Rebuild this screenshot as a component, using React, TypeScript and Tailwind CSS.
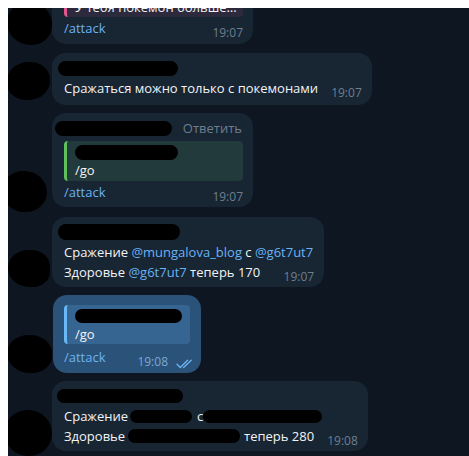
import React from 'react';

const Time = ({ children, out }: { children: React.ReactNode; out?: boolean }) => (
  <span
    className={`ml-auto shrink-0 pl-[13px] text-[12px] leading-4 translate-y-[3px] ${
      out ? 'text-[#7da8d3]' : 'text-[#6d7f8f]'
    }`}
  >
    {children}
  </span>
);

// redacted name, scribbled over with a marker
const Blot = ({ className }: { className: string }) => (
  <span className={`inline-block rounded-full bg-black ${className}`} />
);

const DoubleCheck = () => (
  <svg width="18" height="10" viewBox="0 0 18 10" fill="none" className="ml-[8px] mb-[1px] translate-y-[3px] shrink-0">
    <path d="M1 5.2l3.3 3.3L11.6 1.2" stroke="#6ab3f3" strokeWidth="1.4" strokeLinecap="round" strokeLinejoin="round" />
    <path d="M7.6 8.5L15.2 1.2" stroke="#6ab3f3" strokeWidth="1.4" strokeLinecap="round" />
  </svg>
);

const Link = ({ children }: { children: React.ReactNode }) => (
  <span className="text-[#6ab3f3]">{children}</span>
);

export default function App() {
  return (
    <div className="h-[456px] w-[469px] overflow-hidden bg-white pl-2 pt-2">
      <div className="flex h-[448px] flex-col justify-end overflow-hidden bg-[#0e1621] pb-[5px] font-['Open_Sans',sans-serif] text-[13px] leading-5 text-[#f2f4f6]">
        {/* 1 */}
        <div className="mb-[9px] flex items-end">
          <div className="flex w-11 shrink-0 items-end">
            <div className="relative z-10 -ml-px h-[43px] w-[46px] translate-y-px rounded-[48%_52%_46%_54%] bg-black" />
          </div>
          <div className="w-[201px] rounded-[14px] bg-[#182533] pl-3 pr-[10px] pt-[5px] pb-[6px]">
            <div className="mb-px rounded-[4px] border-l-[3px] border-[#e4568f] bg-[#2d2a3d] pl-[8px] pr-1 pt-[2px] pb-px leading-[18px]">
              <div className="flex h-[18px] items-center">
                <Blot className="-ml-[8px] h-[15px] w-[110px]" />
              </div>
              <div className="overflow-hidden whitespace-nowrap">У тебя покемон больше…</div>
            </div>
            <div className="flex items-end">
              <Link>/attack</Link>
              <Time>19:07</Time>
            </div>
          </div>
        </div>

        {/* 2 */}
        <div className="mb-2 flex items-end">
          <div className="flex w-11 shrink-0 items-end">
            <div className="relative z-10 -ml-px h-[38px] w-[43px] -translate-y-[5px] rounded-[50%_46%_50%_44%] bg-black" />
          </div>
          <div className="rounded-[14px] bg-[#182533] pl-3 pr-[10px] pt-[5px] pb-[7px]">
            <div className="flex h-5 items-center">
              <Blot className="-ml-[6px] h-[15px] w-[120px]" />
            </div>
            <div className="flex items-end">
              <span>Сражаться можно только с покемонами</span>
              <Time>19:07</Time>
            </div>
          </div>
        </div>

        {/* 3 */}
        <div className="mb-[10px] flex items-end">
          <div className="flex w-11 shrink-0 items-end">
            <div className="relative z-10 -ml-[5px] h-[41px] w-[44px] translate-y-[5px] rounded-[46%_54%_50%_50%] bg-black" />
          </div>
          <div className="w-[201px] rounded-[14px] bg-[#182533] pl-3 pr-[10px] pt-[5px] pb-[5px]">
            <div className="flex h-5 items-center">
              <Blot className="-ml-[9px] h-[15px] w-[117px]" />
              <span className="ml-auto pr-px text-[#6d7f8f]">Ответить</span>
            </div>
            <div className="mt-[3px] mb-px rounded-[4px] border-l-[3px] border-[#5fbf5c] bg-[#233a3c] pl-[8px] pr-2 pt-[2px] pb-[2px] leading-[18px]">
              <div className="flex h-[18px] items-center">
                <Blot className="h-[15px] w-[103px]" />
              </div>
              <div>/go</div>
            </div>
            <div className="flex items-end">
              <Link>/attack</Link>
              <Time>19:07</Time>
            </div>
          </div>
        </div>

        {/* 4 */}
        <div className="mb-2 flex items-end">
          <div className="flex w-11 shrink-0 items-end">
            <div className="relative z-10 h-[37px] w-[42px] rounded-[52%_48%_44%_56%] bg-black" />
          </div>
          <div className="rounded-[14px] bg-[#182533] pl-3 pr-[10px] pt-[5px] pb-[5px]">
            <div className="flex h-5 items-center">
              <Blot className="-ml-[6px] h-[16px] w-[122px]" />
            </div>
            <div className="pr-px">
              Сражение <Link>@mungalova_blog</Link> с <Link>@g6t7ut7</Link>
            </div>
            <div className="flex items-end">
              <span>
                Здоровье <Link>@g6t7ut7</Link> теперь 170
              </span>
              <Time>19:07</Time>
            </div>
          </div>
        </div>

        {/* 5, outgoing */}
        <div className="mb-2 flex items-end">
          <div className="flex w-11 shrink-0 items-end">
            <div className="relative z-10 -ml-px h-[38px] w-[46px] rounded-[50%_50%_46%_54%] bg-black" />
          </div>
          <div className="ml-px w-[148px] rounded-[14px] bg-[#2b5278] pl-[11px] pr-[7px] pt-[10px] pb-[6px]">
            <div className="mb-[3px] mr-[4px] rounded-[4px] border-l-[3px] border-[#6ab8f5] bg-[#376592] pl-[8px] pr-2 pt-[2px] pb-px leading-[18px]">
              <div className="flex h-[18px] items-center">
                <Blot className="h-[14px] w-[117px]" />
              </div>
              <div>/go</div>
            </div>
            <div className="flex items-end">
              <Link>/attack</Link>
              <Time out>19:08</Time>
              <DoubleCheck />
            </div>
          </div>
        </div>

        {/* 6 */}
        <div className="flex items-end">
          <div className="flex w-11 shrink-0 items-end">
            <div className="relative z-10 -ml-[3px] h-[46px] w-[47px] translate-y-[5px] rounded-[48%_52%_50%_50%] bg-black" />
          </div>
          <div className="rounded-[14px] bg-[#182533] pl-3 pr-[10px] pt-[5px] pb-[5px]">
            <div className="flex h-5 items-center">
              <Blot className="-ml-[7px] h-[14px] w-[126px]" />
            </div>
            <div className="flex items-center">
              <span>Сражение</span>
              <Blot className="ml-[2px] h-[13px] w-[62px]" />
              <span className="ml-[5px]">с</span>
              <Blot className="h-[13px] w-[119px]" />
            </div>
            <div className="flex items-end">
              <span className="flex items-center">
                <span>Здоровье</span>
                <Blot className="ml-[3px] h-[14px] w-[112px]" />
                <span className="ml-[4px]">теперь 280</span>
              </span>
              <Time>19:08</Time>
            </div>
          </div>
        </div>
      </div>
    </div>
  );
}
